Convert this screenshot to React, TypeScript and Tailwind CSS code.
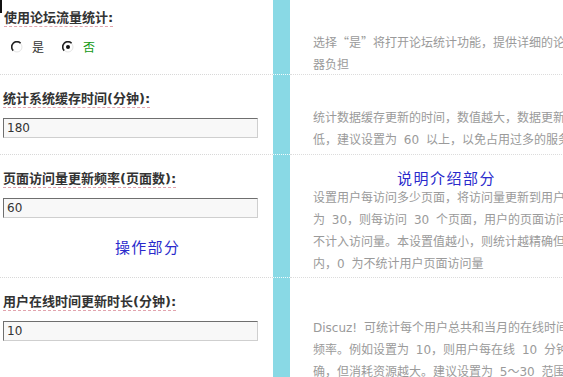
import React from "react";

const cjk = { fontFamily: '"Noto Sans CJK SC", sans-serif' };
const mixed = { fontFamily: '"DejaVu Sans", "Noto Sans CJK SC", sans-serif' };

function Radio({ checked }: { checked?: boolean }) {
  return (
    <svg width="12" height="12" viewBox="0 0 12 12" className="block">
      <circle cx="6" cy="6" r="5" fill="#fff" stroke="#e4e4e4" strokeWidth="1" />
      <path d="M2.2 9.6 A5 5 0 0 1 9.6 2.2" fill="none" stroke="#222" strokeWidth="1.6" />
      {checked && <circle cx="6" cy="6" r="2" fill="#111" />}
    </svg>
  );
}

function Label({ children }: { children: React.ReactNode }) {
  return (
    <span
      className="inline-block text-[13px] font-bold leading-[16px] text-[#333] border-b border-dashed border-[#e2a3ad]"
      style={mixed}
    >
      {children}
    </span>
  );
}

function Input({ value }: { value: string }) {
  return (
    <div
      className="ml-[3px] w-[255px] h-[20px] border border-t-[#6f6f6f] border-l-[#6f6f6f] border-r-[#cfcfcf] border-b-[#cfcfcf] bg-[#f8f8f8] pl-[3px] text-[12px] leading-[18px] text-[#333]"
      style={mixed}
    >
      {value}
    </div>
  );
}

function Lines({ lines }: { lines: React.ReactNode[] }) {
  return (
    <div
      className="pl-[23px] text-[12px] leading-[22px] text-[#9a9a9a] [word-spacing:3px]"
      style={mixed}
    >
      {lines.map((l, i) => (
        <div key={i} className="whitespace-nowrap">
          {l}
        </div>
      ))}
    </div>
  );
}

function Row({
  h,
  left,
  right,
  last,
}: {
  h: string;
  left: React.ReactNode;
  right: React.ReactNode;
  last?: boolean;
}) {
  const sep = last ? "" : "border-b border-dotted";
  return (
    <div className={`flex ${h}`}>
      <div className={`w-[273px] shrink-0 ${sep} border-[#d8d8d8]`}>{left}</div>
      <div className={`w-[17px] shrink-0 bg-[#89d9e5] ${sep} border-[#f2fbfd]`} />
      <div className={`w-[600px] shrink-0 ${sep} border-[#dcdcdc]`}>{right}</div>
    </div>
  );
}

export default function App() {
  return (
    <div lang="zh-CN" className="w-[563px] h-[377px] overflow-hidden bg-white relative">
      <div className="absolute left-0 top-0 w-[2px] h-[13px] bg-[#111]" />
      <Row
        h="h-[75px]"
        left={
          <div className="pt-[4px] pl-[4px]">
            <Label>使用论坛流量统计:</Label>
            <div className="flex items-center mt-[12px] pl-[7px] text-[12px] leading-[14px]" style={cjk}>
              <Radio />
              <span className="ml-[9px] text-[#333]">是</span>
              <span className="ml-[18px]">
                <Radio checked />
              </span>
              <span className="ml-[9px] text-[#119911]">否</span>
            </div>
          </div>
        }
        right={
          <div className="pt-[31px]">
            <Lines
              lines={[
                <>
                  选择<span style={cjk}>“是”</span>将打开论坛统计功能，提供详细的论坛访问统计信息，此功能会轻微加重服务
                </>,
                "器负担",
              ]}
            />
          </div>
        }
      />
      <Row
        h="h-[80px]"
        left={
          <div className="pt-[10px]">
            <div className="pl-[3px]">
              <Label>统计系统缓存时间(分钟):</Label>
            </div>
            <div className="mt-[9px]">
              <Input value="180" />
            </div>
          </div>
        }
        right={
          <div className="pt-[32px]">
            <Lines
              lines={[
                "统计数据缓存更新的时间，数值越大，数据更新频率越",
                "低，建议设置为 60 以上，以免占用过多的服务器资源",
              ]}
            />
          </div>
        }
      />
      <Row
        h="h-[123px]"
        left={
          <div className="pt-[10px]">
            <div className="pl-[3px]">
              <Label>页面访问量更新频率(页面数):</Label>
            </div>
            <div className="mt-[9px]">
              <Input value="60" />
            </div>
            <div
              className="mt-[19px] pl-[115px] text-[15px] leading-[20px] tracking-[1.3px] text-[#2a2acc]"
              style={cjk}
            >
              操作部分
            </div>
          </div>
        }
        right={
          <div className="pt-[14px]">
            <div
              className="pl-[107px] text-[15px] leading-[18px] tracking-[1.5px] text-[#2a2acc]"
              style={cjk}
            >
              说明介绍部分
            </div>
            <Lines
              lines={[
                "设置用户每访问多少页面，将访问量更新到用户资料中，例如设置",
                "为 30，则每访问 30 个页面，用户的页面访问量才会更新一次，",
                "不计入访问量。本设置值越小，则统计越精确但消耗资源越大，建议",
                "内，0 为不统计用户页面访问量",
              ]}
            />
          </div>
        }
      />
      <Row
        h="h-[120px]"
        last
        left={
          <div className="pt-[10px]">
            <div className="pl-[3px]">
              <Label>用户在线时间更新时长(分钟):</Label>
            </div>
            <div className="mt-[9px]">
              <Input value="10" />
            </div>
          </div>
        }
        right={
          <div className="pt-[39px]">
            <Lines
              lines={[
                "Discuz! 可统计每个用户总共和当月的在线时间，本设置用以设定更新用户在线时间的",
                "频率。例如设置为 10，则用户每在线 10 分钟更新一次记录。",
                "确，但消耗资源越大。建议设置为 5～30 范围内",
              ]}
            />
          </div>
        }
      />
    </div>
  );
}
